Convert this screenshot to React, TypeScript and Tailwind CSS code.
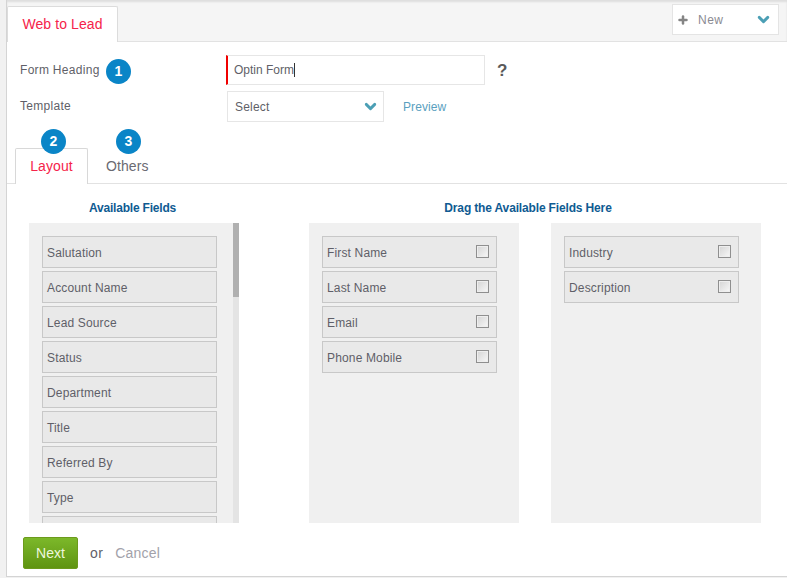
import { ChevronDown, Plus } from "lucide-react";

const availableFields = [
  "Salutation",
  "Account Name",
  "Lead Source",
  "Status",
  "Department",
  "Title",
  "Referred By",
  "Type",
  "",
];

const Badge = ({ n, className }: { n: number; className: string }) => (
  <span
    className={`flex h-[25px] w-[25px] items-center justify-center rounded-full bg-[#0a85c7] text-[14px] font-bold text-white ${className}`}
  >
    {n}
  </span>
);

const FieldRow = ({ label, check }: { label: string; check?: boolean }) => (
  <div className="flex h-[32px] w-[175px] shrink-0 items-center justify-between border border-[#c8c8c8] bg-[#e9e9e9] pl-[4px] pr-[7px] text-[12px] tracking-[0.15px] text-[#5f5f68]">
    <span className="pt-[2px]">{label}</span>
    {check && (
      <span className="-mt-[1px] h-[13px] w-[13px] border border-[#8f8f8f] bg-gradient-to-br from-[#d4d4d4] to-[#f8f8f8] shadow-[inset_0_0_0_1px_#eeeeee]" />
    )}
  </div>
);

export default function App() {
  return (
    <div
      className="flex h-[578px] w-[787px] flex-col overflow-hidden bg-[#f1f1f1] pl-[6px]"
      style={{ fontFamily: '"Liberation Sans", Arial, sans-serif' }}
    >
      <div className="flex h-[577px] flex-col border-b border-l border-[#d4d4d4] bg-white">
        {/* top bar */}
        <div className="flex h-[42px] shrink-0 items-end justify-between border-b border-[#e2e2e2] bg-[#f5f5f5] shadow-[inset_0_2px_2px_#dedede]">
          <div className="-mb-px flex h-[36px] w-[111px] items-center justify-center rounded-t-[2px] border border-b-0 border-[#dcdcdc] bg-white text-[14px] tracking-[0.1px] text-[#f5234a]">
            Web to Lead
          </div>
          <div className="mb-[6px] mr-[8px] flex h-[31px] w-[107px] items-center border border-[#e4e4e4] bg-white pl-[4px] pr-[6px] text-[12px] tracking-[0.5px] text-[#8a8a92]">
            <Plus size={12} strokeWidth={5} className="text-[#858585]" />
            <span className="ml-[9px]">New</span>
            <ChevronDown size={17} strokeWidth={4} className="ml-auto text-[#4b9fb5]" />
          </div>
        </div>

        {/* form */}
        <div className="flex h-[81px] shrink-0 flex-col pl-[13px] pt-[13px]">
          <div className="flex h-[30px] items-center">
            <span className="w-[79px] whitespace-nowrap text-[12px] tracking-[0.3px] text-[#5f5f68]">Form Heading</span>
            <Badge n={1} className="ml-[7px] mt-[2px]" />
            <div className="ml-[95px] flex h-[30px] w-[259px] items-center border border-l-2 border-[#e6e6e6] border-l-[#f00000] bg-white pl-[6px] text-[12px] text-[#5f5f68]">
              Optin Form
              <span className="h-[14px] w-px bg-[#333]" />
            </div>
            <span className="ml-[12px] mt-[1px] text-[17px] font-bold text-[#5a5a5a]">?</span>
          </div>
          <div className="mt-[6px] flex h-[31px] items-center">
            <span className="-mt-[2px] w-[207px] text-[12px] tracking-[0.3px] text-[#5f5f68]">Template</span>
            <div className="flex h-[31px] w-[157px] items-center justify-between border border-[#e6e6e6] bg-white pl-[7px] pr-[4px] text-[12px] tracking-[0.2px] text-[#5f5f68]">
              Select
              <ChevronDown size={17} strokeWidth={4} className="text-[#4b9fb5]" />
            </div>
            <span className="ml-[19px] text-[12px] tracking-[0.1px] text-[#5a9fc0]">Preview</span>
          </div>
        </div>

        {/* sub tabs */}
        <div className="relative flex h-[61px] shrink-0 items-end border-b border-[#e2e2e2] pl-[8px]">
          <div className="relative -mb-px flex h-[36px] w-[73px] items-center justify-center rounded-t-[2px] border border-b-0 border-[#d8d8d8] bg-white text-[14px] tracking-[0.1px] text-[#f5234a]">
            Layout
            <Badge n={2} className="absolute left-[25px] top-[-20px]" />
          </div>
          <div className="relative flex h-[35px] w-[80px] items-center pl-[18px] pt-[2px] text-[14px] tracking-[0.1px] text-[#6a6a72]">
            Others
            <Badge n={3} className="absolute left-[28px] top-[-19px]" />
          </div>
        </div>

        {/* columns */}
        <div className="flex h-[339px] shrink-0 pl-[22px] pt-[17px]">
          <div className="flex w-[210px] flex-col">
            <h3 className="mb-[7px] h-[15px] pr-[3px] text-center text-[12px] font-bold leading-[15px] tracking-[-0.2px] text-[#0f5b92]">
              Available Fields
            </h3>
            <div className="flex h-[300px] overflow-hidden bg-[#f0f0f0]">
              <div className="flex w-[204px] flex-col gap-[3px] pl-[13px] pt-[13px]">
                {availableFields.map((f, i) => (
                  <FieldRow key={i} label={f} />
                ))}
              </div>
              <div className="h-full w-[6px] bg-[#e4e4e4]">
                <div className="h-[74px] bg-[#b0b0b0]" />
              </div>
            </div>
          </div>

          <div className="ml-[70px] flex w-[452px] flex-col">
            <h3 className="mb-[7px] h-[15px] pr-[14px] text-center text-[12px] font-bold leading-[15px] tracking-[-0.15px] text-[#0f5b92]">
              Drag the Available Fields Here
            </h3>
            <div className="flex h-[300px] justify-between">
              <div className="flex w-[210px] flex-col gap-[3px] bg-[#f0f0f0] pl-[13px] pt-[13px]">
                {["First Name", "Last Name", "Email", "Phone Mobile"].map((f) => (
                  <FieldRow key={f} label={f} check />
                ))}
              </div>
              <div className="flex w-[210px] flex-col gap-[3px] bg-[#f0f0f0] pl-[13px] pt-[13px]">
                {["Industry", "Description"].map((f) => (
                  <FieldRow key={f} label={f} check />
                ))}
              </div>
            </div>
          </div>
        </div>

        {/* footer */}
        <div className="flex items-center pl-[16px] pt-[14px]">
          <button className="h-[32px] w-[55px] rounded-[2px] border border-[#6c9a1c] bg-gradient-to-b from-[#7cb82a] to-[#5f9410] text-[14px] text-[#eef7dc]">
            Next
          </button>
          <span className="ml-[12px] text-[14px] tracking-[0.4px] text-[#5f5f68]">or</span>
          <span className="ml-[12px] text-[14px] tracking-[0.2px] text-[#a2a2aa]">Cancel</span>
        </div>
      </div>
    </div>
  );
}
